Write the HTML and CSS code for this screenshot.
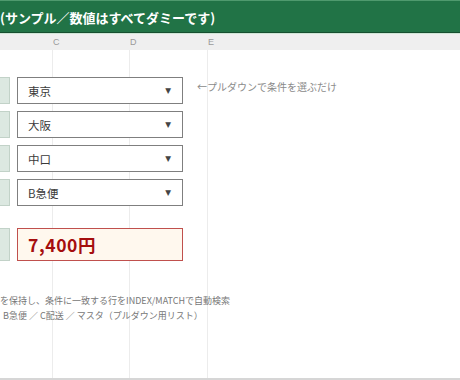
FILE: index.html
```html
<!DOCTYPE html>
<html lang="ja">
<head>
<meta charset="utf-8">
<link rel="stylesheet" href="styles.css">
</head>
<body>
<div class="page">
  <div class="titlebar"><span class="title">(サンプル／数値はすべてダミーです)</span></div>
  <div class="colhead">
    <div class="ch ch-b"></div>
    <div class="ch ch-c">C</div>
    <div class="ch ch-d">D</div>
    <div class="ch ch-e">E</div>
  </div>
  <div class="sheet">
    <div class="rows">
      <div class="row">
        <div class="lbl"></div>
        <div class="sel"><span>東京</span><span class="arr">▼</span></div>
        <div class="note">←プルダウンで条件を選ぶだけ</div>
      </div>
      <div class="row">
        <div class="lbl"></div>
        <div class="sel"><span>大阪</span><span class="arr">▼</span></div>
      </div>
      <div class="row">
        <div class="lbl"></div>
        <div class="sel"><span>中口</span><span class="arr">▼</span></div>
      </div>
      <div class="row">
        <div class="lbl"></div>
        <div class="sel"><span>B急便</span><span class="arr">▼</span></div>
      </div>
      <div class="row result-row">
        <div class="lbl lbl-big"></div>
        <div class="result">7,400円</div>
      </div>
    </div>
    <div class="foot">
      <p class="f1">を保持し、条件に一致する行をINDEX/MATCHで自動検索</p>
      <p class="f2">B急便 ／ C配送 ／ マスタ（プルダウン用リスト）</p>
    </div>
  </div>
</div>
</body>
</html>
```

FILE: styles.css
```css
html, body {
  margin: 0;
  padding: 0;
  background: #fff;
}
body {
  width: 460px;
  height: 380px;
  overflow: hidden;
  font-family: "Noto Sans CJK JP", "Noto Sans", sans-serif;
}
.page {
  width: 460px;
  height: 380px;
  display: flex;
  flex-direction: column;
}
.titlebar {
  height: 31px;
  background: #217346;
  border-top: 1px solid #4f9a6e;
  border-bottom: 1px solid #174f30;
  box-shadow: 0 1px 0 #cfe6d6;
  display: flex;
  align-items: center;
  overflow: hidden;
  white-space: nowrap;
}
.title {
  color: #fff;
  font-weight: bold;
  font-size: 13px;
  padding-top: 2px;
}
.colhead {
  margin-top: 1px;
  height: 16px;
  background: #efefef;
  display: grid;
  grid-template-columns: 52px 77px 78px 1fr;
}
.ch {
  font-family: "Liberation Sans", sans-serif;
  font-size: 9px;
  color: #9a9a9a;
  padding-left: 1px;
  line-height: 16px;
}
.sheet {
  flex: 1;
  background-image:
    linear-gradient(#ececec, #ececec),
    linear-gradient(#ececec, #ececec),
    linear-gradient(#ececec, #ececec);
  background-size: 1px 100%, 1px 100%, 1px 100%;
  background-position: 52px 0, 129px 0, 207px 0;
  background-repeat: no-repeat;
  border-bottom: 2px solid #d6d6d6;
  display: flex;
  flex-direction: column;
}
.rows {
  padding-top: 27px;
  display: flex;
  flex-direction: column;
  gap: 7px;
}
.row {
  display: flex;
  align-items: stretch;
  height: 27px;
}
.lbl {
  width: 10px;
  background: #dce8e1;
  border: 1px solid #c2d2c8;
  border-left: none;
  box-sizing: border-box;
}
.sel {
  margin-left: 7px;
  width: 166px;
  box-sizing: border-box;
  border: 1px solid #7f7f7f;
  background: #fff;
  display: flex;
  align-items: center;
  justify-content: space-between;
  padding: 0 11px 0 10px;
  font-size: 11.5px;
  color: #3a3a3a;
}
.arr {
  font-size: 7.5px;
  color: #444;
  font-family: "DejaVu Sans", sans-serif;
}
.note {
  margin-left: 14px;
  font-size: 10px;
  color: #8a8a8a;
  align-self: center;
  margin-top: -9px;
  white-space: nowrap;
}
.result-row {
  margin-top: 15px;
  height: 33px;
}
.result {
  margin-left: 7px;
  width: 166px;
  box-sizing: border-box;
  border: 1px solid #c0504d;
  background: #fff8ee;
  display: flex;
  align-items: center;
  padding-left: 10px;
  font-size: 17.5px;
  letter-spacing: 0.6px;
  font-weight: bold;
  color: #a50e0e;
}
.foot {
  margin-top: 32px;
}
.foot p {
  margin: 0;
  font-size: 9px;
  color: #777;
  line-height: 15px;
  white-space: nowrap;
}
.f2 {
  padding-left: 3px;
}
```
